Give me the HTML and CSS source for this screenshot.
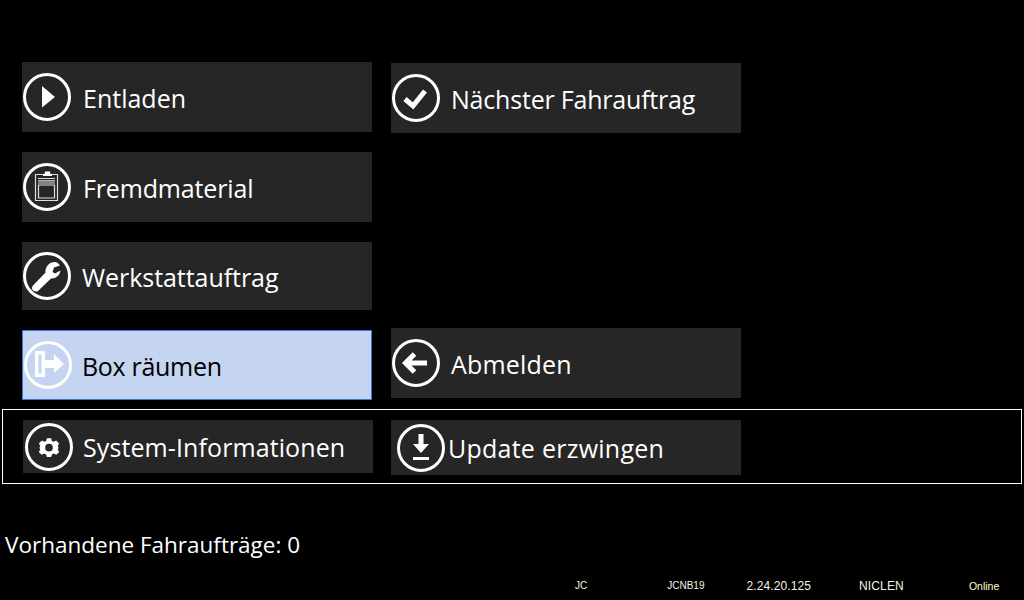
FILE: index.html
```html
<!DOCTYPE html>
<html lang="de">
<head>
    <meta charset="UTF-8">
    <meta name="viewport" content="width=device-width, initial-scale=1.0">
    <title>Hauptmenü</title>
    <link rel="stylesheet" href="styles.css">
</head>
<body>
    <div class="menu">
        <div class="col">
            <button class="btn">
                <svg class="icon" viewBox="0 0 48 48"><circle class="ring" cx="24" cy="24" r="22.5"/><path class="fill" d="M19 13 L32 24 L19 34.5 Z"/></svg>
                <span>Entladen</span>
            </button>
            <button class="btn btn-fremd">
                <svg class="icon" viewBox="0 0 48 48"><circle class="ring" cx="24" cy="24" r="22.5"/><path class="thin" d="M12.5 11.5 H34.5 V37.5 H12.5 Z"/><path class="fill" d="M20 13 V11 H21.5 L22 8.5 H27 L27.5 11 H29 V13 Z"/><path class="thin" d="M15 15.5 H32 M15 17.8 H32 M15 20 H32"/><path class="thin" d="M15.5 22 H31.5 V35 H15.5 Z"/></svg>
                <span>Fremdmaterial</span>
            </button>
            <button class="btn btn-werk">
                <svg class="icon" viewBox="0 0 48 48"><circle class="ring" cx="24" cy="24" r="22.5"/><path class="fill" d="M37 13.5 L31 15.5 L29.5 20 L32 21.5 L37.5 18.5 C37 23 33 27 28 26.5 L15 39 C13 40.5 9.5 39 9 36.5 C9 35 9.5 34 10.5 33 L22.5 20.5 C22 15 26 10 32 10 C34 10 35.5 11.5 37 13.5 Z"/></svg>
                <span>Werkstattauftrag</span>
            </button>
            <button class="btn btn-active">
                <svg class="icon" viewBox="0 0 48 48"><circle class="ring" cx="24" cy="24" r="22.5"/><path class="fill" fill-rule="evenodd" d="M11 10 H21 V36 H11 Z M14.5 13.5 V32.5 H17.5 V13.5 Z"/><path class="fill" d="M21 19 H30 V13 L40 23 L30 32 V27 H21 Z"/></svg>
                <span>Box räumen</span>
            </button>
        </div>
        <div class="col col-right">
            <button class="btn btn-next">
                <svg class="icon" viewBox="0 0 48 48"><circle class="ring" cx="24" cy="24" r="22.5"/><path class="check" d="M13 25 L21 32 L33 17"/></svg>
                <span>Nächster Fahrauftrag</span>
            </button>
            <button class="btn btn-abmelden">
                <svg class="icon" viewBox="0 0 48 48"><circle class="ring" cx="24" cy="24" r="22.5"/><path class="arrow" d="M14 24 H35 M22.5 15 L13.5 24 L22.5 33"/></svg>
                <span>Abmelden</span>
            </button>
        </div>
    </div>

    <div class="system-box">
        <button class="btn btn-system">
            <svg class="icon" viewBox="0 0 48 48"><circle class="ring" cx="24" cy="24" r="22.5"/><path class="fill" fill-rule="evenodd" transform="translate(3.6 3.8) scale(.85)" d="M21.5 13.5 H26.5 L27.3 16.6 L29.6 17.6 L32.4 16 L35.9 19.5 L34.3 22.3 L35.2 24.6 L34.4 26.9 L36 29.6 L32.5 33 L29.7 31.5 L27.4 32.5 L26.5 35.5 H21.5 L20.6 32.5 L18.3 31.5 L15.5 33 L12 29.6 L13.6 26.9 L12.8 24.6 L13.7 22.3 L12.1 19.5 L15.6 16 L18.4 17.6 L20.7 16.6 Z M24 20 A4.5 4.5 0 1 0 24 29 A4.5 4.5 0 1 0 24 20 Z"/></svg>
            <span>System-Informationen</span>
        </button>
        <button class="btn btn-update">
            <svg class="icon" viewBox="0 0 48 48"><circle class="ring" cx="24" cy="24" r="22.5"/><path class="fill" d="M21.5 10 H26.5 V20 H32 L24 29 L16 20 H21.5 Z M16 33 H32 V36 H16 Z"/></svg>
            <span>Update erzwingen</span>
        </button>
    </div>

    <div class="orders">Vorhandene Fahraufträge: 0</div>

    <div class="statusbar">
        <span>JC</span>
        <span class="st-host">JCNB19</span>
        <span class="st-version">2.24.20.125</span>
        <span class="st-name">NICLEN</span>
        <span class="st-online">Online</span>
    </div>
</body>
</html>
```

FILE: styles.css
```css
body {
    font-family: "Open Sans", "Noto Sans", sans-serif;
    margin: 0;
    padding: 0;
    width: 1024px;
    height: 600px;
    overflow: hidden;
    background-color: #000;
    color: #fff;
    display: flex;
    flex-direction: column;
}

.menu {
    display: flex;
    gap: 19px;
    padding: 62px 0 0 22px;
    box-sizing: border-box;
    height: 400px;
    flex: none;
}

.col {
    display: flex;
    flex-direction: column;
    width: 350px;
}

.col-right {
    padding-top: 1px;
}

.btn {
    display: flex;
    align-items: center;
    flex: none;
    width: 350px;
    height: 70px;
    margin: 0;
    padding: 0;
    background-color: #262626;
    color: #fff;
    border: none;
    font-family: inherit;
    font-size: 25px;
    text-align: left;
}

.btn span {
    margin-top: 2px;
}

.btn-fremd {
    margin-top: 20px;
    letter-spacing: -0.15px;
}

.btn-werk {
    margin-top: 20px;
    height: 68px;
    letter-spacing: -0.05px;
}

.btn-werk .icon {
    margin-right: 11px;
}

.btn-active {
    margin-top: 20px;
    background-color: #c5d4f0;
    color: #000;
    border: 1px solid #3a78d8;
    box-sizing: border-box;
    letter-spacing: -0.3px;
}

.btn-active .icon {
    margin-right: 10px;
}

.btn-next {
    letter-spacing: -0.2px;
}

.btn-next .icon {
    margin-right: 11px;
}

.btn-abmelden {
    margin-top: 195px;
    letter-spacing: 0.2px;
}

.btn-abmelden .icon {
    margin-right: 11px;
}

.icon {
    width: 48px;
    height: 48px;
    margin: 0 12px 0 1px;
    flex: none;
}

.ring {
    fill: none;
    stroke: #fff;
    stroke-width: 3;
}

.fill {
    fill: #fff;
}

.thin {
    fill: none;
    stroke: #ddd;
    stroke-width: 1.2;
}

.check,
.arrow {
    fill: none;
    stroke: #fff;
    stroke-width: 5;
}

.system-box {
    display: flex;
    gap: 18px;
    align-items: flex-start;
    flex: none;
    box-sizing: border-box;
    width: 1020px;
    height: 75px;
    margin: 9px 0 0 2px;
    padding: 10px 0 0 20px;
    border: 1px solid #fff;
}

.system-box .btn span {
    margin-top: 0;
}

.btn-system {
    height: 53px;
    padding-left: 1px;
    letter-spacing: 0.1px;
}

.btn-system .icon {
    margin-right: 10px;
}

.btn-update {
    height: 55px;
    padding-left: 5px;
    letter-spacing: 0.25px;
}

.btn-update .icon {
    margin-right: 3px;
}

.orders {
    margin: 46px 0 0 5px;
    font-size: 22.5px;
    line-height: 30px;
}

.statusbar {
    display: flex;
    align-items: center;
    margin-top: 19px;
    padding-left: 575px;
    font-family: "Liberation Sans", Arial, sans-serif;
    font-size: 10px;
    line-height: 14px;
    color: #f4f4e0;
}

.st-host {
    margin-left: 80px;
}

.st-version {
    margin-left: 42px;
    font-size: 12px;
    letter-spacing: 0.1px;
}

.st-name {
    margin-left: 48px;
    font-size: 12px;
    letter-spacing: 0.15px;
}

.st-online {
    margin-left: 65px;
    font-size: 10.5px;
    color: #ffffc8;
}
```
